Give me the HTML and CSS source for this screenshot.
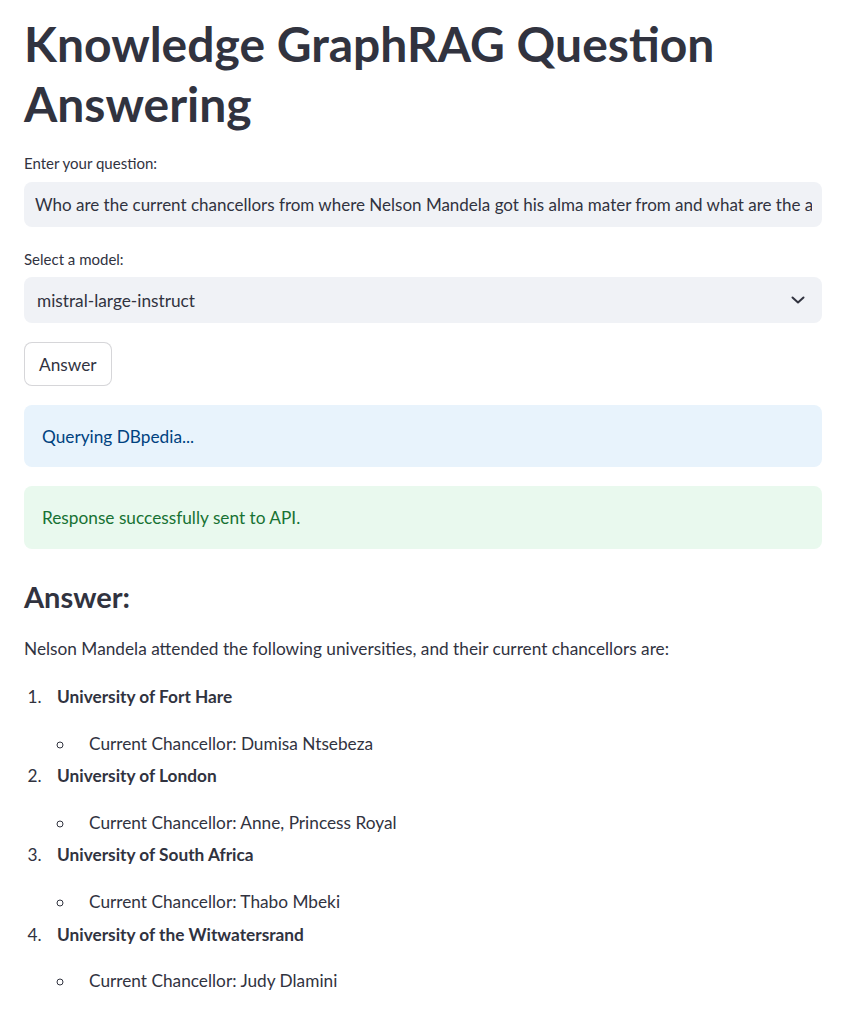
FILE: index.html
```html
<!DOCTYPE html>
<html lang="en">
<head>
<meta charset="utf-8">
<title>Knowledge GraphRAG Question Answering</title>
<link rel="stylesheet" href="styles.css">
</head>
<body>
<main class="main">
  <h1 class="title">Knowledge GraphRAG Question Answering</h1>

  <label class="field-label label-question" for="q">Enter your question:</label>
  <input id="q" class="text-input" type="text" value="Who are the current chancellors from where Nelson Mandela got his alma mater from and what are the ages of them?" readonly>

  <div class="field-label label-model">Select a model:</div>
  <div class="select-box">
    <span class="select-value">mistral-large-instruct</span>
    <svg class="chevron" width="14" height="8" viewBox="0 0 14 8" aria-hidden="true"><path d="M1.5 1.5 L7 6.5 L12.5 1.5" fill="none" stroke="#31333F" stroke-width="2" stroke-linecap="round" stroke-linejoin="round"/></svg>
  </div>

  <button class="btn" type="button">Answer</button>

  <div class="alert alert-info">Querying DBpedia...</div>
  <div class="alert alert-success">Response successfully sent to API.</div>

  <h3 class="answer-heading">Answer:</h3>
  <p class="answer-intro">Nelson Mandela attended the following universities, and their current chancellors are:</p>
  <ol class="uni-list">
    <li><p><strong>University of Fort Hare</strong></p>
      <ul><li>Current Chancellor: Dumisa Ntsebeza</li></ul></li>
    <li><p><strong>University of London</strong></p>
      <ul><li>Current Chancellor: Anne, Princess Royal</li></ul></li>
    <li><p><strong>University of South Africa</strong></p>
      <ul><li>Current Chancellor: Thabo Mbeki</li></ul></li>
    <li><p><strong>University of the Witwatersrand</strong></p>
      <ul><li>Current Chancellor: Judy Dlamini</li></ul></li>
  </ol>
</main>
</body>
</html>
```

FILE: styles.css
```css
* { box-sizing: border-box; }

html, body {
  margin: 0;
  padding: 0;
  background: #ffffff;
}

body {
  font-family: Lato, "Noto Sans", sans-serif;
  color: #31333F;
  font-size: 17.25px;
}

.main {
  width: 855px;
  padding: 14px 33px 40px 24px;
  display: flex;
  flex-direction: column;
  align-items: stretch;
}

.title {
  margin: 0;
  font-size: 48px;
  font-weight: 700;
  line-height: 60px;
  color: #31333F;
}

.field-label {
  display: block;
  font-size: 15px;
  line-height: 22px;
  height: 22px;
}
.label-question { margin-top: 18px; margin-bottom: 8px; }
.label-model { margin-top: 21px; margin-bottom: 7px; }

.text-input {
  display: block;
  width: 100%;
  height: 45px;
  border: none;
  border-radius: 8px;
  background: #F0F2F6;
  padding: 0 10px 0 11px;
  font-family: inherit;
  font-size: 17px;
  color: #31333F;
  outline: none;
}

.select-box {
  height: 46px;
  border-radius: 8px;
  background: #F0F2F6;
  display: flex;
  align-items: center;
  justify-content: space-between;
  padding: 0 17px 0 13px;
  font-size: 17.25px;
}
.chevron { display: block; }

.btn {
  align-self: flex-start;
  margin-top: 19px;
  height: 44px;
  padding: 0 14px;
  background: #fff;
  border: 1px solid rgba(49, 51, 63, 0.2);
  border-radius: 8px;
  font-family: inherit;
  font-size: 17.25px;
  color: #31333F;
}

.alert {
  margin-top: 19px;
  border-radius: 8px;
  padding: 0 18px;
  display: flex;
  align-items: center;
  font-size: 17.25px;
}
.alert-info {
  height: 62px;
  background: #E8F3FC;
  color: #004280;
}
.alert-success {
  height: 63px;
  background: #E9F9EE;
  color: #177233;
}

.answer-heading {
  margin: 28px 0 0;
  font-size: 29px;
  font-weight: 700;
  line-height: 40px;
}

.answer-intro {
  margin: 17px 0 0;
  line-height: 29px;
}

.uni-list {
  margin: 20px 0 0;
  padding-left: 22px;
}
.uni-list > li {
  margin: 3.6px 0 0;
  padding-left: 11px;
  line-height: 28.8px;
}
.uni-list > li:first-child { margin-top: 0; }
.uni-list > li > p {
  margin: 0 0 18px;
}
.uni-list strong { font-weight: 700; }
.uni-list ul {
  margin: 0;
  padding-left: 18px;
  list-style-type: circle;
}
.uni-list ul li {
  padding-left: 14px;
  line-height: 28.8px;
}
```
